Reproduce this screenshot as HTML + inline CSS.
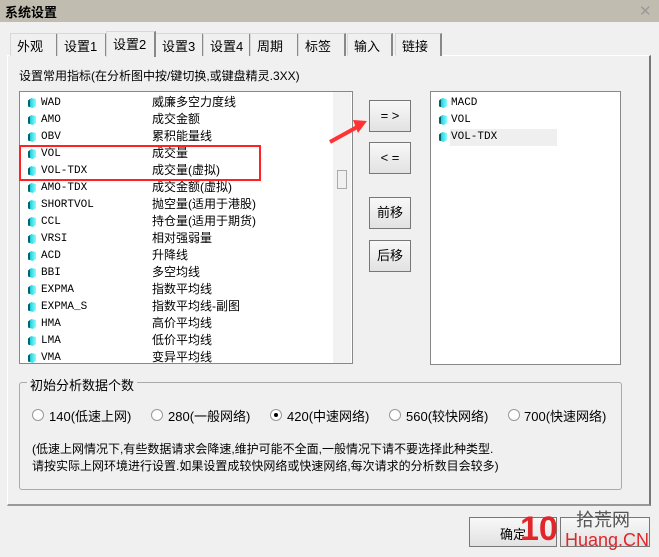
<!DOCTYPE html>
<html><head><meta charset="utf-8"><style>
*{margin:0;padding:0;box-sizing:border-box}
body{width:659px;height:557px;background:#f0f0f0;position:relative;overflow:hidden;font-family:"Liberation Sans","Noto Sans CJK SC",sans-serif;font-size:12px;color:#000}
.a{position:absolute;white-space:nowrap}
.title{left:0;top:0;width:659px;height:22px;background:#c0bcb0;}
.tab{position:absolute;top:33px;height:23px;border:1px solid #d8d8d8;border-right:2px solid #888;border-bottom:none;background:#f0f0f0;padding:2px 0 0 6px;font-size:13px}
.panel{left:7px;top:55px;width:644px;height:451px;border:1px solid #fff;border-right:2px solid #777;border-bottom:2px solid #999}
.list{background:#fff;border:1px solid #888}
.row{position:absolute;height:17px;line-height:17px;z-index:3}
.ic{position:absolute;width:8px;height:10px;top:4px;background:linear-gradient(90deg,#066 0,#066 25%,#2cd 25%,#8ff 100%);clip-path:polygon(0 25%,40% 0,100% 10%,100% 80%,60% 100%,0 85%)}
.code{font-family:"Liberation Mono",monospace;font-size:11px;position:absolute;top:1px}
.btn{position:absolute;left:369px;width:42px;height:32px;border:1px solid #777;background:linear-gradient(#f8f8f8,#e2e2e2);text-align:center;line-height:30px;font-size:13px}
.radio{position:absolute;width:12px;height:12px;border-radius:50%;border:1px solid #999;background:#fff;top:409px}
</style></head><body>
<div class="a title"></div>
<div class="a" style="left:5px;top:2px;font-size:13px;font-weight:bold">系统设置</div>
<div class="a" style="left:639px;top:2px;font-size:15px;color:#999">✕</div>
<div class="a panel"></div>
<div class="tab" style="left:10px;width:48px">外观</div>
<div class="tab" style="left:57px;width:50px">设置1</div>
<div class="tab" style="left:155px;width:49px">设置3</div>
<div class="tab" style="left:203px;width:48px">设置4</div>
<div class="tab" style="left:250px;width:49px">周期</div>
<div class="tab" style="left:298px;width:48px">标签</div>
<div class="tab" style="left:347px;width:46px">输入</div>
<div class="tab" style="left:395px;width:47px">链接</div>
<div class="tab" style="left:106px;top:31px;height:26px;width:50px;z-index:2">设置2</div>
<div class="a" style="left:19px;top:67px;font-size:12px">设置常用指标(在分析图中按/键切换,或键盘精灵.3XX)</div>

<div class="a list" style="left:19px;top:91px;width:334px;height:273px;overflow:hidden">
<div style="position:absolute;left:313px;top:0;width:18px;height:272px;background:#f2f2f2"></div>
<div style="position:absolute;left:317px;top:78px;width:10px;height:19px;border:1px solid #aaa;background:#f0f0f0"></div>
</div>
<div class="a list" style="left:430px;top:91px;width:191px;height:274px"></div>
<div class="a" style="left:450px;top:129px;width:107px;height:17px;background:#efefef"></div>
<div class="a" style="left:19px;top:145px;width:242px;height:36px;border:2px solid #f22;z-index:4"></div>
<div id="L"></div>

<div class="btn" style="top:100px">= &gt;</div>
<div class="btn" style="top:142px">&lt; =</div>
<div class="btn" style="top:197px">前移</div>
<div class="btn" style="top:240px">后移</div>

<svg class="a" style="left:325px;top:110px" width="45" height="40"><line x1="5" y1="32" x2="34" y2="16" stroke="#f33" stroke-width="4"/><polygon points="42,11 28,10 33,23" fill="#f33"/></svg>

<div class="a" style="left:19px;top:382px;width:603px;height:108px;border:1px solid #aaa;border-radius:3px"></div>
<div class="a" style="left:27px;top:375px;background:#f0f0f0;padding:0 3px;font-size:13px">初始分析数据个数</div>
<div class="radio" style="left:32px"></div><div class="a" style="left:49px;top:406px;font-size:13px">140(低速上网)</div>
<div class="radio" style="left:151px"></div><div class="a" style="left:168px;top:406px;font-size:13px">280(一般网络)</div>
<div class="radio" style="left:270px"></div><div class="a" style="left:274px;top:413px;width:4px;height:4px;border-radius:50%;background:#000"></div><div class="a" style="left:287px;top:406px;font-size:13px">420(中速网络)</div>
<div class="radio" style="left:389px"></div><div class="a" style="left:406px;top:406px;font-size:13px">560(较快网络)</div>
<div class="radio" style="left:508px"></div><div class="a" style="left:524px;top:406px;font-size:13px">700(快速网络)</div>
<div class="a" style="left:32px;top:440px;font-size:12px">(低速上网情况下,有些数据请求会降速,维护可能不全面,一般情况下请不要选择此种类型.</div>
<div class="a" style="left:32px;top:457px;font-size:12px">请按实际上网环境进行设置.如果设置成较快网络或快速网络,每次请求的分析数目会较多)</div>

<div class="a" style="left:469px;top:517px;width:88px;height:30px;border:1px solid #777;background:linear-gradient(#f8f8f8,#e2e2e2);padding:6px 0 0 30px;font-size:13px">确定</div>
<div class="a" style="left:560px;top:517px;width:90px;height:30px;border:1px solid #777;background:linear-gradient(#f8f8f8,#e2e2e2)"></div>
<div class="a" style="left:520px;top:509px;font-size:34px;font-weight:bold;color:#e0262a;line-height:40px">10</div>
<div class="a" style="left:576px;top:506px;font-size:18px;color:#555">拾荒网</div>
<div class="a" style="left:565px;top:530px;font-size:18px;color:#e0262a">Huang.CN</div>

<script>
var L=[["WAD","威廉多空力度线"],["AMO","成交金额"],["OBV","累积能量线"],["VOL","成交量"],["VOL-TDX","成交量(虚拟)"],["AMO-TDX","成交金额(虚拟)"],["SHORTVOL","抛空量(适用于港股)"],["CCL","持仓量(适用于期货)"],["VRSI","相对强弱量"],["ACD","升降线"],["BBI","多空均线"],["EXPMA","指数平均线"],["EXPMA_S","指数平均线-副图"],["HMA","高价平均线"],["LMA","低价平均线"],["VMA","变异平均线"]];
var h="";L.forEach(function(r,i){var y=94+i*17;var H=i==15?363-y:17;h+='<div class="row" style="left:20px;top:'+y+'px;width:310px;height:'+H+'px;overflow:hidden"><span class="ic" style="left:8px"></span><span class="code" style="left:21px">'+r[0]+'</span><span style="position:absolute;left:132px">'+r[1]+'</span></div>';});
["MACD","VOL","VOL-TDX"].forEach(function(c,i){var y=94+i*17;h+='<div class="row" style="left:431px;top:'+y+'px;width:180px"><span class="ic" style="left:8px"></span><span class="code" style="left:20px">'+c+'</span></div>';});
document.getElementById("L").outerHTML=h;
</script>
</body></html>
